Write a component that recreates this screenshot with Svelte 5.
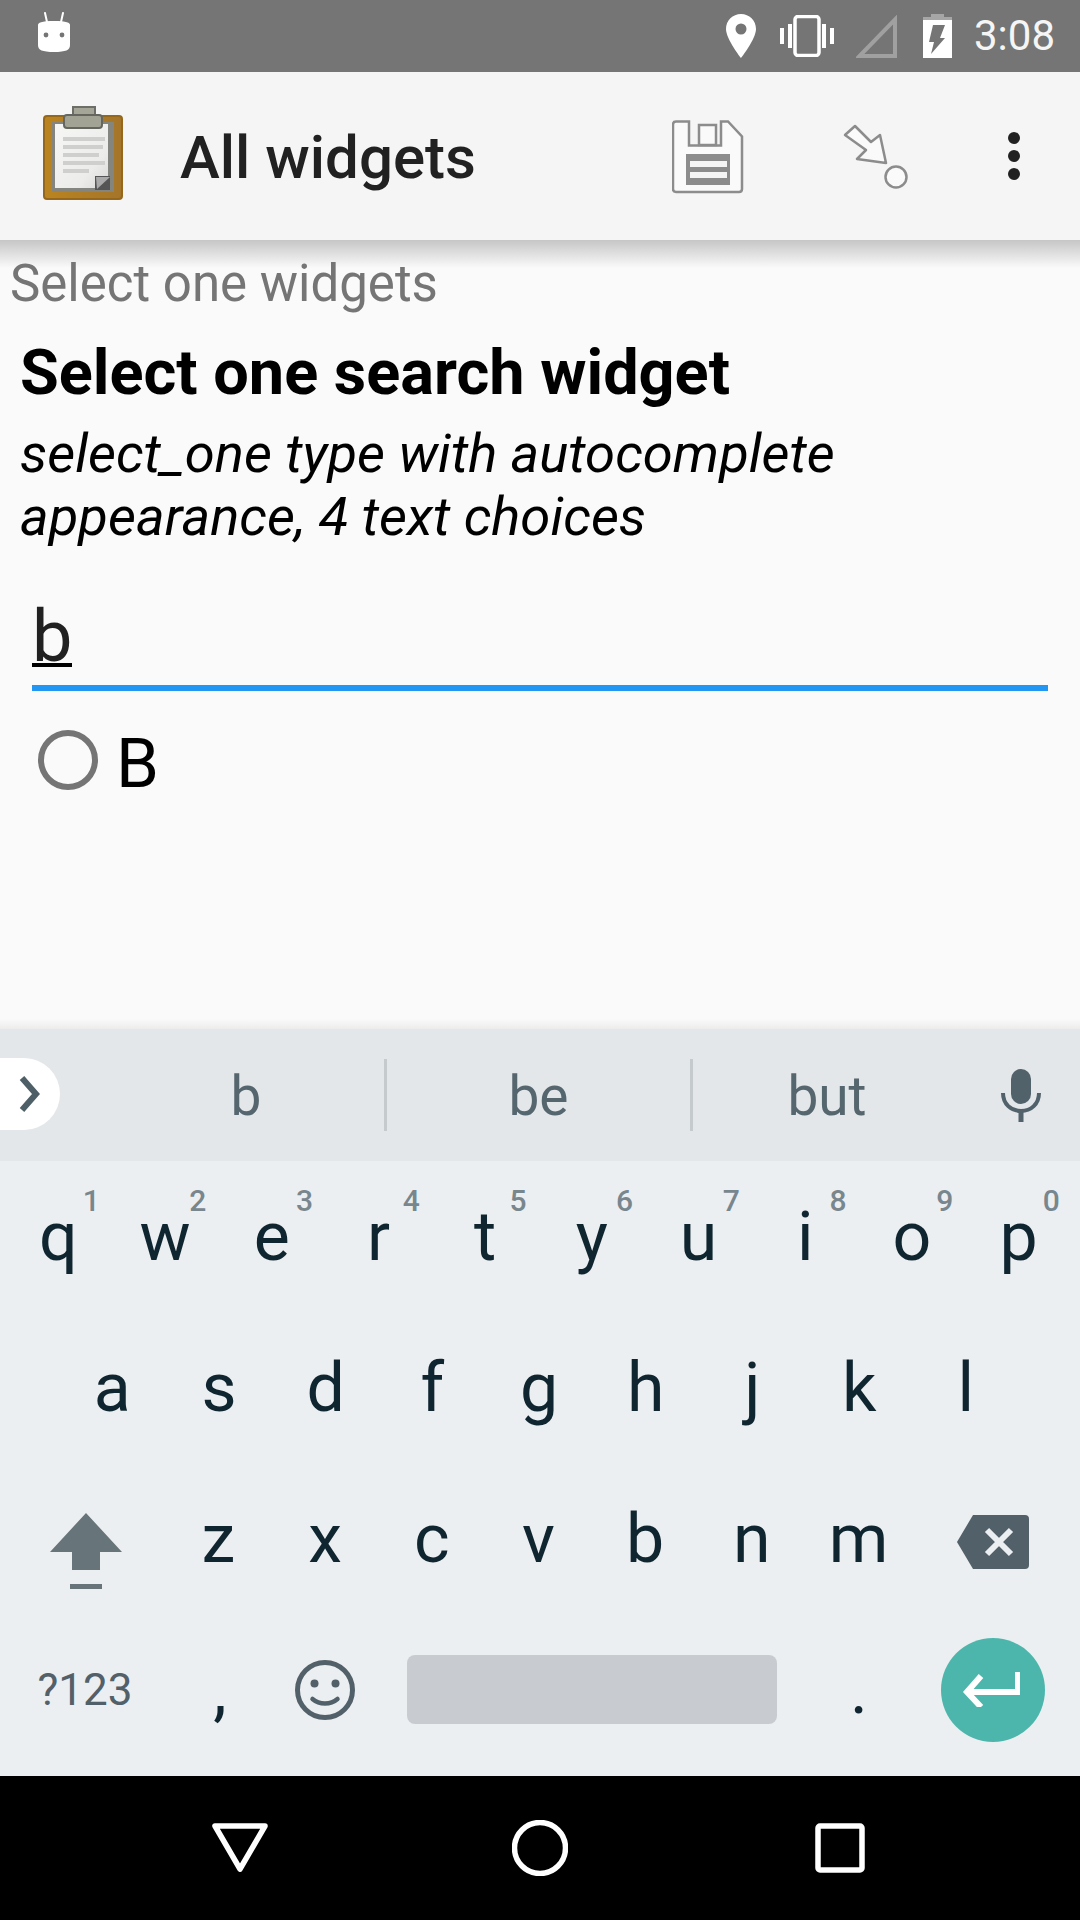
<script>
  const row1 = [['q','1'],['w','2'],['e','3'],['r','4'],['t','5'],['y','6'],['u','7'],['i','8'],['o','9'],['p','0']];
  const row2 = ['a','s','d','f','g','h','j','k','l'];
  const row3 = ['z','x','c','v','b','n','m'];
</script>

<div class="screen">
  <header class="status">
    <svg class="android" width="34" height="41" viewBox="0 0 34 41">
      <path d="M8 1l2 9M26 1l-2 9" stroke="#fff" stroke-width="2" stroke-linecap="round"/>
      <path d="M1 13c0-2 3-4 16-4s16 2 16 4v20c0 5-4 7-16 7S1 38 1 33z" fill="#fff"/>
      <circle cx="9" cy="23" r="2.4" fill="#757575"/><circle cx="25" cy="23" r="2.4" fill="#757575"/>
    </svg>
    <span class="status-right">
      <svg width="30" height="44" viewBox="0 0 30 44" class="pin">
        <path fill-rule="evenodd" d="M15 0C6.700 0 0 6.500 0 15c0 10 15 29 15 29s15-19 15-29C30 6.500 23.300 0 15 0zm0 20.500a5.500 5.500 0 1 1 0-11 5.500 5.500 0 0 1 0 11z" fill="#fff"/>
      </svg>
      <svg width="54" height="42" viewBox="0 0 54 42" class="vib">
        <rect x="15" y="1.500" width="24" height="39" rx="3" fill="none" stroke="#fff" stroke-width="3.500"/>
        <rect x="0" y="13" width="4" height="16" fill="#fff"/><rect x="8" y="9" width="4" height="24" fill="#fff"/>
        <rect x="42" y="9" width="4" height="24" fill="#fff"/><rect x="50" y="13" width="4" height="16" fill="#fff"/>
      </svg>
      <svg width="42" height="43" viewBox="0 0 42 43" class="sig">
        <path d="M39 4.500V41H3.500z" fill="none" stroke="#a0a0a0" stroke-width="4"/>
      </svg>
      <svg width="29" height="44" viewBox="0 0 29 44" class="bat">
        <path d="M8 0h13v3h8v4H0V3h8z" fill="#a6a6a6"/>
        <path fill-rule="evenodd" d="M0 6h29v38H0zM10 11h12l-5 13h5L8 40l3-12H6z" fill="#fff"/>
      </svg>
      <span class="time">3:08</span>
    </span>
  </header>

  <div class="appbar">
    <svg class="clip" width="84" height="94" viewBox="0 0 84 94">
      <defs>
        <linearGradient id="board" x1="0" y1="0" x2="1" y2="0"><stop offset="0" stop-color="#bb8420"/><stop offset="1" stop-color="#a4752a"/></linearGradient>
        <linearGradient id="paper" x1="0" y1="0" x2="1" y2="1"><stop offset="0" stop-color="#f6f6f5"/><stop offset="0.7" stop-color="#ececea"/><stop offset="1" stop-color="#d8d8d6"/></linearGradient>
      </defs>
      <rect x="1" y="10" width="78" height="83" rx="3" fill="url(#board)" stroke="#94671a" stroke-width="2"/>
      <rect x="9" y="16" width="62" height="70" fill="#85857f"/>
      <path d="M12 18h53v53L54 82H12z" fill="url(#paper)"/>
      <g fill="#cfcfcd"><rect x="20" y="31" width="42" height="4"/><rect x="20" y="39" width="40" height="4"/><rect x="20" y="47" width="36" height="4"/><rect x="20" y="55" width="42" height="4"/><rect x="20" y="63" width="26" height="4"/></g>
      <path d="M52 70h15v14H52z" fill="#555"/>
      <path d="M53 71h14L54 83z" fill="#aaa"/>
      <path d="M30 1h22v9H30z" fill="#a6a698" stroke="#6e6e68" stroke-width="2"/>
      <rect x="21" y="9" width="38" height="13" rx="3" fill="#a3a395" stroke="#666660" stroke-width="2"/>
    </svg>
    <h1 class="title">All widgets</h1>
    <svg class="save" width="72" height="74" viewBox="0 0 72 74">
      <path d="M4 1.500h13v24h32v-24h7l14 15V69q0 3-3 3H4q-3 0-3-3V4.500q0-3 3-3z" fill="#fafafa" stroke="#8c8c8c" stroke-width="2.500"/>
      <rect x="27" y="5" width="17" height="20" fill="#fafafa" stroke="#8c8c8c" stroke-width="2.500"/>
      <rect x="14" y="34" width="44" height="31" fill="#8c8c8c"/>
      <rect x="18" y="41" width="37" height="6" fill="#f5f5f5"/><rect x="18" y="52" width="37" height="6" fill="#f5f5f5"/>
    </svg>
    <svg class="goto" width="66" height="66" viewBox="0 0 66 66">
      <path d="M2 11L12 2l16 16 9-7 6 28-29-4 9-9z" fill="#fafafa" stroke="#8c8c8c" stroke-width="2.500" stroke-linejoin="round"/>
      <circle cx="53" cy="53" r="10.500" fill="#fafafa" stroke="#8c8c8c" stroke-width="2.500"/>
    </svg>
    <span class="dots"><i></i><i></i><i></i></span>
  </div>

  <main class="body">
    <div class="group">Select one widgets</div>
    <div class="question">Select one search widget</div>
    <div class="hint">select_one type with autocomplete<br>appearance, 4 text choices</div>
    <div class="field"><span class="typed">b</span></div>
    <div class="choice"><span class="radio"></span><span class="choice-label">B</span></div>
  </main>

  <section class="keyboard">
    <div class="strip">
      <span class="pill">
        <svg width="22" height="36" viewBox="0 0 22 36"><path d="M3 2l14 16L3 34" fill="none" stroke="#4f5f68" stroke-width="6"/></svg>
      </span>
      <span class="cand c1">b</span>
      <span class="cand c2">be</span>
      <span class="cand c3">but</span>
      <svg class="mic" width="40" height="53" viewBox="0 0 40 53">
        <rect x="10" y="0" width="20" height="35" rx="10" fill="#52626b"/>
        <path d="M2 24c0 11 8 18 18 18s18-7 18-18" fill="none" stroke="#52626b" stroke-width="4"/>
        <rect x="17.500" y="41" width="5" height="12" fill="#52626b"/>
      </svg>
    </div>
    <div class="keys">
      <div class="row r1">
        {#each row1 as k}
          <span class="key">{k[0]}<sup class="num">{k[1]}</sup></span>
        {/each}
      </div>
      <div class="row r2">
        {#each row2 as k}<span class="key">{k}</span>{/each}
      </div>
      <div class="row r3">
        <span class="shift">
          <svg width="72" height="76" viewBox="0 0 72 76">
            <path d="M36 0l36 39H50v18H22V39H0z" fill="#67757b"/>
            <rect x="20" y="71" width="32" height="5" fill="#67757b"/>
          </svg>
        </span>
        {#each row3 as k}<span class="key">{k}</span>{/each}
        <span class="back">
          <svg width="72" height="54" viewBox="0 0 72 54">
            <path d="M16 0h52q4 0 4 4v46q0 4-4 4H16L0 27z" fill="#526069"/>
            <path d="M30 15l24 24M54 15L30 39" stroke="#eceff1" stroke-width="6"/>
          </svg>
        </span>
      </div>
      <div class="row r4">
        <span class="sym">?123</span>
        <span class="comma">,</span>
        <span class="emoji">
          <svg width="60" height="60" viewBox="0 0 60 60">
            <circle cx="30" cy="30" r="27.500" fill="none" stroke="#526069" stroke-width="5"/>
            <circle cx="19.500" cy="23.500" r="4" fill="#526069"/><circle cx="40.500" cy="23.500" r="4" fill="#526069"/>
            <path d="M17.500 39c7 6 18 6 25 0" fill="none" stroke="#526069" stroke-width="4.500" stroke-linecap="round"/>
          </svg>
        </span>
        <span class="space-cell"><span class="space"></span></span>
        <span class="period">.</span>
        <span class="enter-cell">
          <span class="enter">
            <svg class="enter-arrow" width="58" height="36" viewBox="0 0 58 36">
              <path d="M56 1v20H6M19 5L5 21l14 15" fill="none" stroke="#fff" stroke-width="6"/>
            </svg>
          </span>
        </span>
      </div>
    </div>
  </section>

  <nav class="navbar">
    <svg width="58" height="50" viewBox="0 0 58 50"><path d="M4 3h50L29 46z" fill="none" stroke="#fff" stroke-width="5.500" stroke-linejoin="round"/></svg>
    <svg width="56" height="56" viewBox="0 0 56 56"><circle cx="28" cy="28" r="25.500" fill="none" stroke="#fff" stroke-width="5.500"/></svg>
    <svg width="50" height="50" viewBox="0 0 50 50"><rect x="3" y="3" width="44" height="44" rx="2" fill="none" stroke="#fff" stroke-width="5.500"/></svg>
  </nav>
</div>

<style>
  :global(body) { margin: 0; background: #fafafa; }
  .screen { width: 1080px; height: 1920px; display: flex; flex-direction: column; overflow: hidden; font-family: Roboto, sans-serif; }

  .status { height: 72px; background: #757575; display: flex; align-items: center; justify-content: space-between; padding: 0 25px 0 37px; box-sizing: border-box; }
  .android { margin-top: -8px; }
  .status-right { display: flex; align-items: center; }
  .pin { margin-right: 24px; }
  .vib { margin-right: 22px; margin-top: -1px; }
  .sig { margin-right: 25px; }
  .bat { margin-right: 22px; }
  .time { color: #f5f5f5; font-size: 42px; line-height: 72px; }

  .appbar { height: 168px; background: #f5f5f5; display: flex; align-items: center; flex: none; position: relative; z-index: 1; padding-left: 43px; box-sizing: border-box; }
  .clip { margin-top: -6px; }
  .title { margin: 2px 0 0 53px; font-size: 60px; font-weight: 500; color: #212121; width: 198px; flex: 1; white-space: nowrap; }
  .save { margin-right: 99px; margin-top: 2px; }
  .goto { margin-right: 99px; margin-top: 1px; }
  .dots { display: flex; flex-direction: column; gap: 6px; margin-right: 60px; }
  .dots i { width: 12px; height: 12px; border-radius: 50%; background: #212121; display: block; }

  .body { flex: 1; background: #fafafa; position: relative; min-height: 0; }
  .body::before { content: ""; position: absolute; left: 0; right: 0; top: 0; height: 28px; background: linear-gradient(#c6c6c6, #fafafa); }
  .body::after { content: ""; position: absolute; left: 0; right: 0; bottom: 0; height: 10px; background: linear-gradient(#fafafa, #ececec); }
  .group { position: relative; padding: 16px 0 0 10px; font-size: 51px; line-height: 56px; color: #757575; }
  .question { padding: 26px 0 0 20px; font-size: 63px; line-height: 70px; font-weight: 700; color: #000; }
  .hint { padding: 14px 0 0 20px; font-size: 54.400px; line-height: 63px; font-style: italic; color: #000; }
  .field { margin: 45px 32px 0; height: 92px; border-bottom: 6px solid #2196f3; font-size: 72px; line-height: 88px; color: #212121; }
  .typed { display: inline-block; height: 70px; border-bottom: 4px solid #000; }
  .choice { display: flex; align-items: center; margin: 35px 0 0 38px; }
  .radio { width: 48px; height: 48px; border: 6px solid #757575; border-radius: 50%; }
  .choice-label { margin: 8px 0 0 18px; font-size: 69px; line-height: 60px; color: #000; }

  .keyboard { flex: none; background: #eceff1; height: 747px; display: flex; flex-direction: column; }
  .strip { height: 132px; background: #e3e7ea; display: flex; align-items: center; position: relative; padding-left: 108px; box-sizing: border-box; }
  .pill { position: absolute; left: 0; top: 29px; width: 60px; height: 72px; background: #fff; border-radius: 0 36px 36px 0; display: flex; align-items: center; padding-left: 19px; box-sizing: border-box; }
  .cand { font-size: 55px; color: #56666f; text-align: center; height: 72px; line-height: 74px; }
  .c1 { width: 276px; border-right: 3px solid #c5cacd; }
  .c2 { width: 303px; border-right: 3px solid #c5cacd; }
  .c3 { width: 268px; }
  .mic { margin-left: 40px; }

  .keys { flex: 1; display: grid; grid-template-rows: repeat(4, 1fr); padding-bottom: 11px; box-sizing: border-box; min-height: 0; }
  .row { display: flex; align-items: center; }
  .r1 { padding-left: 5px; }
  .r2 { padding-left: 59px; }
  .key { position: relative; width: 106.700px; text-align: center; font-size: 68px; line-height: 100px; color: #0f2530; }
  .num { position: absolute; right: 12px; top: -4px; font-size: 30px; line-height: 36px; font-weight: 500; color: #78868e; vertical-align: baseline; }
  .shift { width: 165px; display: flex; justify-content: center; padding-left: 7px; box-sizing: border-box; margin-top: 25px; }
  .back { width: 162px; display: flex; justify-content: center; margin-top: 7px; }
  .sym { width: 170px; text-align: center; color: #526069; font-size: 44px; }
  .comma { width: 100px; text-align: center; color: #0f2530; font-size: 68px; }
  .emoji { width: 110px; display: flex; justify-content: center; }
  .space-cell { width: 424px; display: flex; justify-content: center; }
  .space { width: 370px; height: 69px; border-radius: 8px; background: #c8ccd0; }
  .period { width: 110px; text-align: center; color: #0f2530; font-size: 68px; }
  .enter-cell { width: 158px; display: flex; justify-content: center; }
  .enter { width: 104px; height: 104px; border-radius: 50%; background: #4db6ac; display: flex; align-items: center; justify-content: center; }
  .enter-arrow { margin: 0 4px 2px 0; }

  .navbar { height: 144px; flex: none; background: #000; display: grid; grid-template-columns: repeat(3, 300px); justify-content: center; justify-items: center; align-items: center; }
</style>
